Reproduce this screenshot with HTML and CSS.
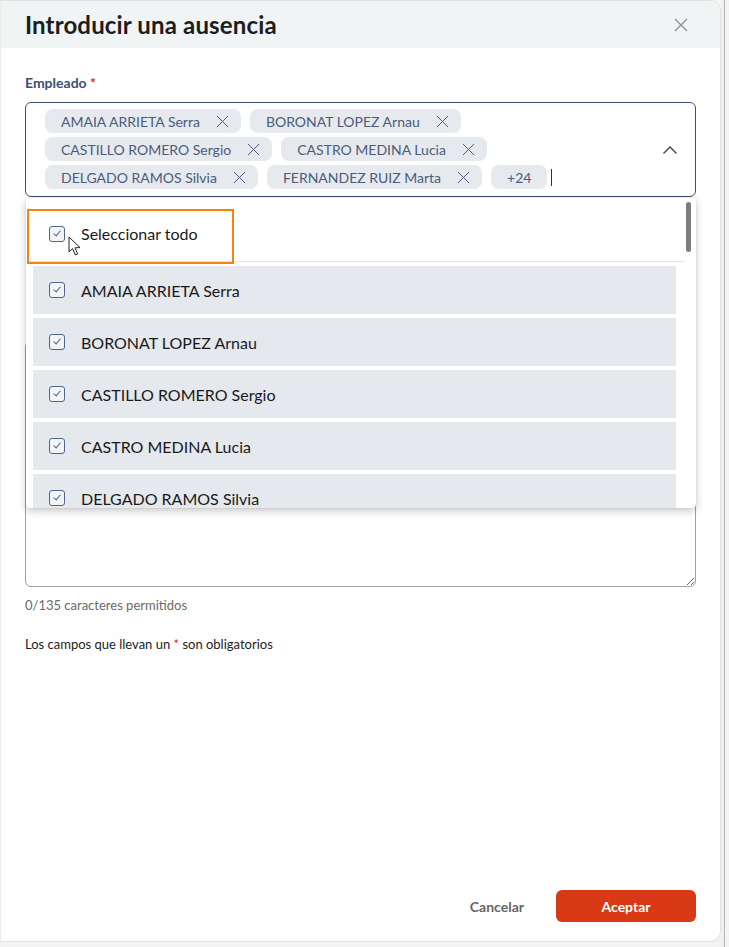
FILE: index.html
```html
<!DOCTYPE html>
<html lang="es">
<head>
    <meta charset="UTF-8">
    <meta name="viewport" content="width=device-width, initial-scale=1.0">
    <title>Introducir una ausencia</title>
    <link rel="stylesheet" href="styles.css">
</head>
<body>
    <div class="page">
        <div class="modal">
            <div class="modal-header">
                <h2>Introducir una ausencia</h2>
                <button class="close-btn" aria-label="Cerrar">
                    <svg width="14" height="14" viewBox="0 0 14 14"><path d="M1 1L13 13M13 1L1 13" stroke="#8a8f96" stroke-width="1.3" fill="none"/></svg>
                </button>
            </div>

            <div class="modal-body">
                <div class="field">
                    <label class="field-label">Empleado <span class="req">*</span></label>
                    <div class="multiselect">
                        <div class="select-box">
                            <div class="chips">
                                <span class="chip">AMAIA ARRIETA Serra <i class="chip-x"></i></span>
                                <span class="chip">BORONAT LOPEZ Arnau <i class="chip-x"></i></span>
                                <span class="chip">CASTILLO ROMERO Sergio <i class="chip-x"></i></span>
                                <span class="chip">CASTRO MEDINA Lucia <i class="chip-x"></i></span>
                                <span class="chip">DELGADO RAMOS Silvia <i class="chip-x"></i></span>
                                <span class="chip">FERNANDEZ RUIZ Marta <i class="chip-x"></i></span>
                                <span class="chip chip-more">+24</span>
                                <span class="caret"></span>
                            </div>
                            <svg class="chevron" width="16" height="10" viewBox="0 0 16 10"><path d="M1.5 8.5L8 2L14.5 8.5" stroke="#3a3f47" stroke-width="1.3" fill="none"/></svg>
                        </div>

                        <div class="dropdown">
                            <div class="select-all">
                                <label class="select-all-label">
                                    <span class="checkbox"></span>
                                    Seleccionar todo
                                </label>
                            </div>
                            <ul class="options">
                                <li class="option"><span class="checkbox"></span>AMAIA ARRIETA Serra</li>
                                <li class="option"><span class="checkbox"></span>BORONAT LOPEZ Arnau</li>
                                <li class="option"><span class="checkbox"></span>CASTILLO ROMERO Sergio</li>
                                <li class="option"><span class="checkbox"></span>CASTRO MEDINA Lucia</li>
                                <li class="option"><span class="checkbox"></span>DELGADO RAMOS Silvia</li>
                                <li class="option"><span class="checkbox"></span>FERNANDEZ RUIZ Marta</li>
                            </ul>
                            <div class="scroll-thumb"></div>
                            <svg class="pointer" width="14" height="21" viewBox="0 0 14 21"><path d="M1 1L1 16L4.6 12.6L7.3 19L9.6 18L7 11.8L12 11.6Z" fill="#fff" stroke="#222" stroke-width="1" stroke-linejoin="round"/></svg>
                        </div>
                    </div>
                </div>

                <div class="field covered">
                    <label class="field-label">Tipo de ausencia <span class="req">*</span></label>
                    <div class="plain-input"></div>
                </div>

                <div class="field">
                    <label class="field-label covered">Observaciones</label>
                    <textarea class="textarea"></textarea>
                    <p class="counter">0/135 caracteres permitidos</p>
                </div>

                <p class="note">Los campos que llevan un <span class="req">*</span> son obligatorios</p>
            </div>

            <div class="modal-footer">
                <button class="btn-link">Cancelar</button>
                <button class="btn-primary">Aceptar</button>
            </div>
        </div>
        <div class="gutter"></div>
    </div>
</body>
</html>
```

FILE: styles.css
```css
* {
    box-sizing: border-box;
}
body {
    margin: 0;
    font-family: Lato, "Open Sans", sans-serif;
    background-color: #f4f4f4;
}
.page {
    display: flex;
    height: 947px;
    overflow: hidden;
}
.modal {
    width: 721px;
    height: 942px;
    background-color: #fff;
    border: 1px solid #e2e2e2;
    border-left-color: #ececec;
    border-radius: 0 11px 11px 0;
    display: flex;
    flex-direction: column;
    overflow: hidden;
}
.gutter {
    flex: 1;
    border-left: 3px solid #f0f0f0;
    position: relative;
}
.gutter::after {
    content: "";
    position: absolute;
    left: 0;
    top: 0;
    bottom: 0;
    width: 1px;
    background-color: #b5b5b5;
}

/* header */
.modal-header {
    height: 47px;
    background-color: #f1f4f5;
    padding: 0 32px 0 24px;
    display: flex;
    align-items: center;
    justify-content: space-between;
}
.modal-header h2 {
    margin: 0;
    font-size: 24px;
    font-weight: 700;
    color: #1c1d1f;
    letter-spacing: 0.15px;
}
.close-btn {
    border: none;
    background: none;
    padding: 0;
    display: flex;
    cursor: pointer;
}

/* body */
.modal-body {
    flex: 1;
    padding: 26px 24px 0 24px;
}
.field {
    margin-bottom: 24px;
}
.field.covered,
.field-label.covered {
    visibility: hidden;
}
.field-label {
    display: block;
    font-size: 14px;
    font-weight: 700;
    color: #3b5073;
    line-height: 18px;
    margin-bottom: 10px;
}
.req {
    color: #e0252b;
}

/* multiselect */
.multiselect {
    position: relative;
}
.select-box {
    border: 1px solid #3a4f72;
    border-radius: 6px;
    padding: 6px 60px 5px 19px;
    min-height: 95px;
    position: relative;
}
.chips {
    display: flex;
    flex-wrap: wrap;
    gap: 4px 9px;
    align-items: center;
}
.chip {
    display: inline-flex;
    align-items: center;
    height: 24px;
    padding: 0 13px 0 16px;
    background-color: #e6e9ee;
    border-radius: 8px;
    font-size: 14px;
    color: #4b5c7b;
    white-space: nowrap;
}
.chip-x {
    width: 11px;
    height: 11px;
    margin-left: 17px;
    background:
        linear-gradient(45deg, transparent 46%, #4b5c7b 46%, #4b5c7b 54%, transparent 54%),
        linear-gradient(-45deg, transparent 46%, #4b5c7b 46%, #4b5c7b 54%, transparent 54%);
}
.chip-more {
    padding: 0 16px;
}
.caret {
    width: 1px;
    height: 17px;
    background-color: #333;
    margin-left: -5px;
}
.chevron {
    position: absolute;
    right: 17px;
    top: 42px;
}

/* dropdown */
.dropdown {
    position: absolute;
    top: 96px;
    left: 1px;
    right: 0;
    height: 310px;
    background-color: #fff;
    border-radius: 0 0 4px 4px;
    box-shadow: 0 3px 8px rgba(0, 0, 0, 0.22), 0 0 2px rgba(0, 0, 0, 0.1);
    overflow: hidden;
    z-index: 5;
}
.select-all {
    height: 64px;
    margin-right: 12px;
    border-bottom: 1px solid #e2e4e7;
    padding: 11px 0 0 1px;
}
.select-all-label {
    display: flex;
    align-items: center;
    gap: 16px;
    width: 207px;
    height: 55px;
    border: 2px solid #f7830f;
    padding: 0 0 6px 20px;
    font-size: 16px;
    color: #1a1a1a;
    position: relative;
    z-index: 1;
}
.options {
    list-style: none;
    margin: 0;
    padding: 4px 20px 0 7px;
}
.option {
    display: flex;
    align-items: center;
    gap: 16px;
    height: 48px;
    margin-bottom: 4px;
    padding-left: 16px;
    background-color: #e5e8ed;
    font-size: 16px;
    color: #1a1a1a;
}
.checkbox {
    width: 16px;
    height: 16px;
    flex-shrink: 0;
    border: 1.5px solid #506689;
    border-radius: 3px;
    background-color: #f2f4f8;
    position: relative;
}
.checkbox::after {
    content: "";
    position: absolute;
    left: 4.5px;
    top: 2px;
    width: 3px;
    height: 6px;
    border-right: 1px solid #506689;
    border-bottom: 1px solid #506689;
    transform: rotate(40deg);
}
.scroll-thumb {
    position: absolute;
    top: 4px;
    right: 5px;
    width: 5px;
    height: 50px;
    border-radius: 3px;
    background-color: #7d7d7d;
}
.pointer {
    position: absolute;
    left: 42px;
    top: 38px;
    z-index: 2;
}

/* below */
.plain-input {
    height: 40px;
    border: 1px solid #a0a0a0;
    border-radius: 6px;
}
.textarea {
    display: block;
    width: 100%;
    height: 246px;
    border: 1px solid #a0a0a0;
    border-radius: 6px;
    resize: vertical;
    font-family: inherit;
}
.counter {
    margin: 10px 0 0;
    font-size: 13px;
    color: #6a6a6a;
}
.note {
    margin: -1px 0 0;
    font-size: 13px;
    color: #222;
}

/* footer */
.modal-footer {
    display: flex;
    justify-content: flex-end;
    align-items: center;
    gap: 32px;
    padding: 0 24px 19px;
}
.btn-link {
    border: none;
    background: none;
    font-family: inherit;
    font-size: 14px;
    font-weight: 700;
    color: #666;
    padding: 0;
}
.btn-primary {
    width: 140px;
    height: 32px;
    border: none;
    border-radius: 6px;
    background-color: #d93915;
    color: #fff;
    font-family: inherit;
    font-size: 14px;
    font-weight: 700;
}
```
